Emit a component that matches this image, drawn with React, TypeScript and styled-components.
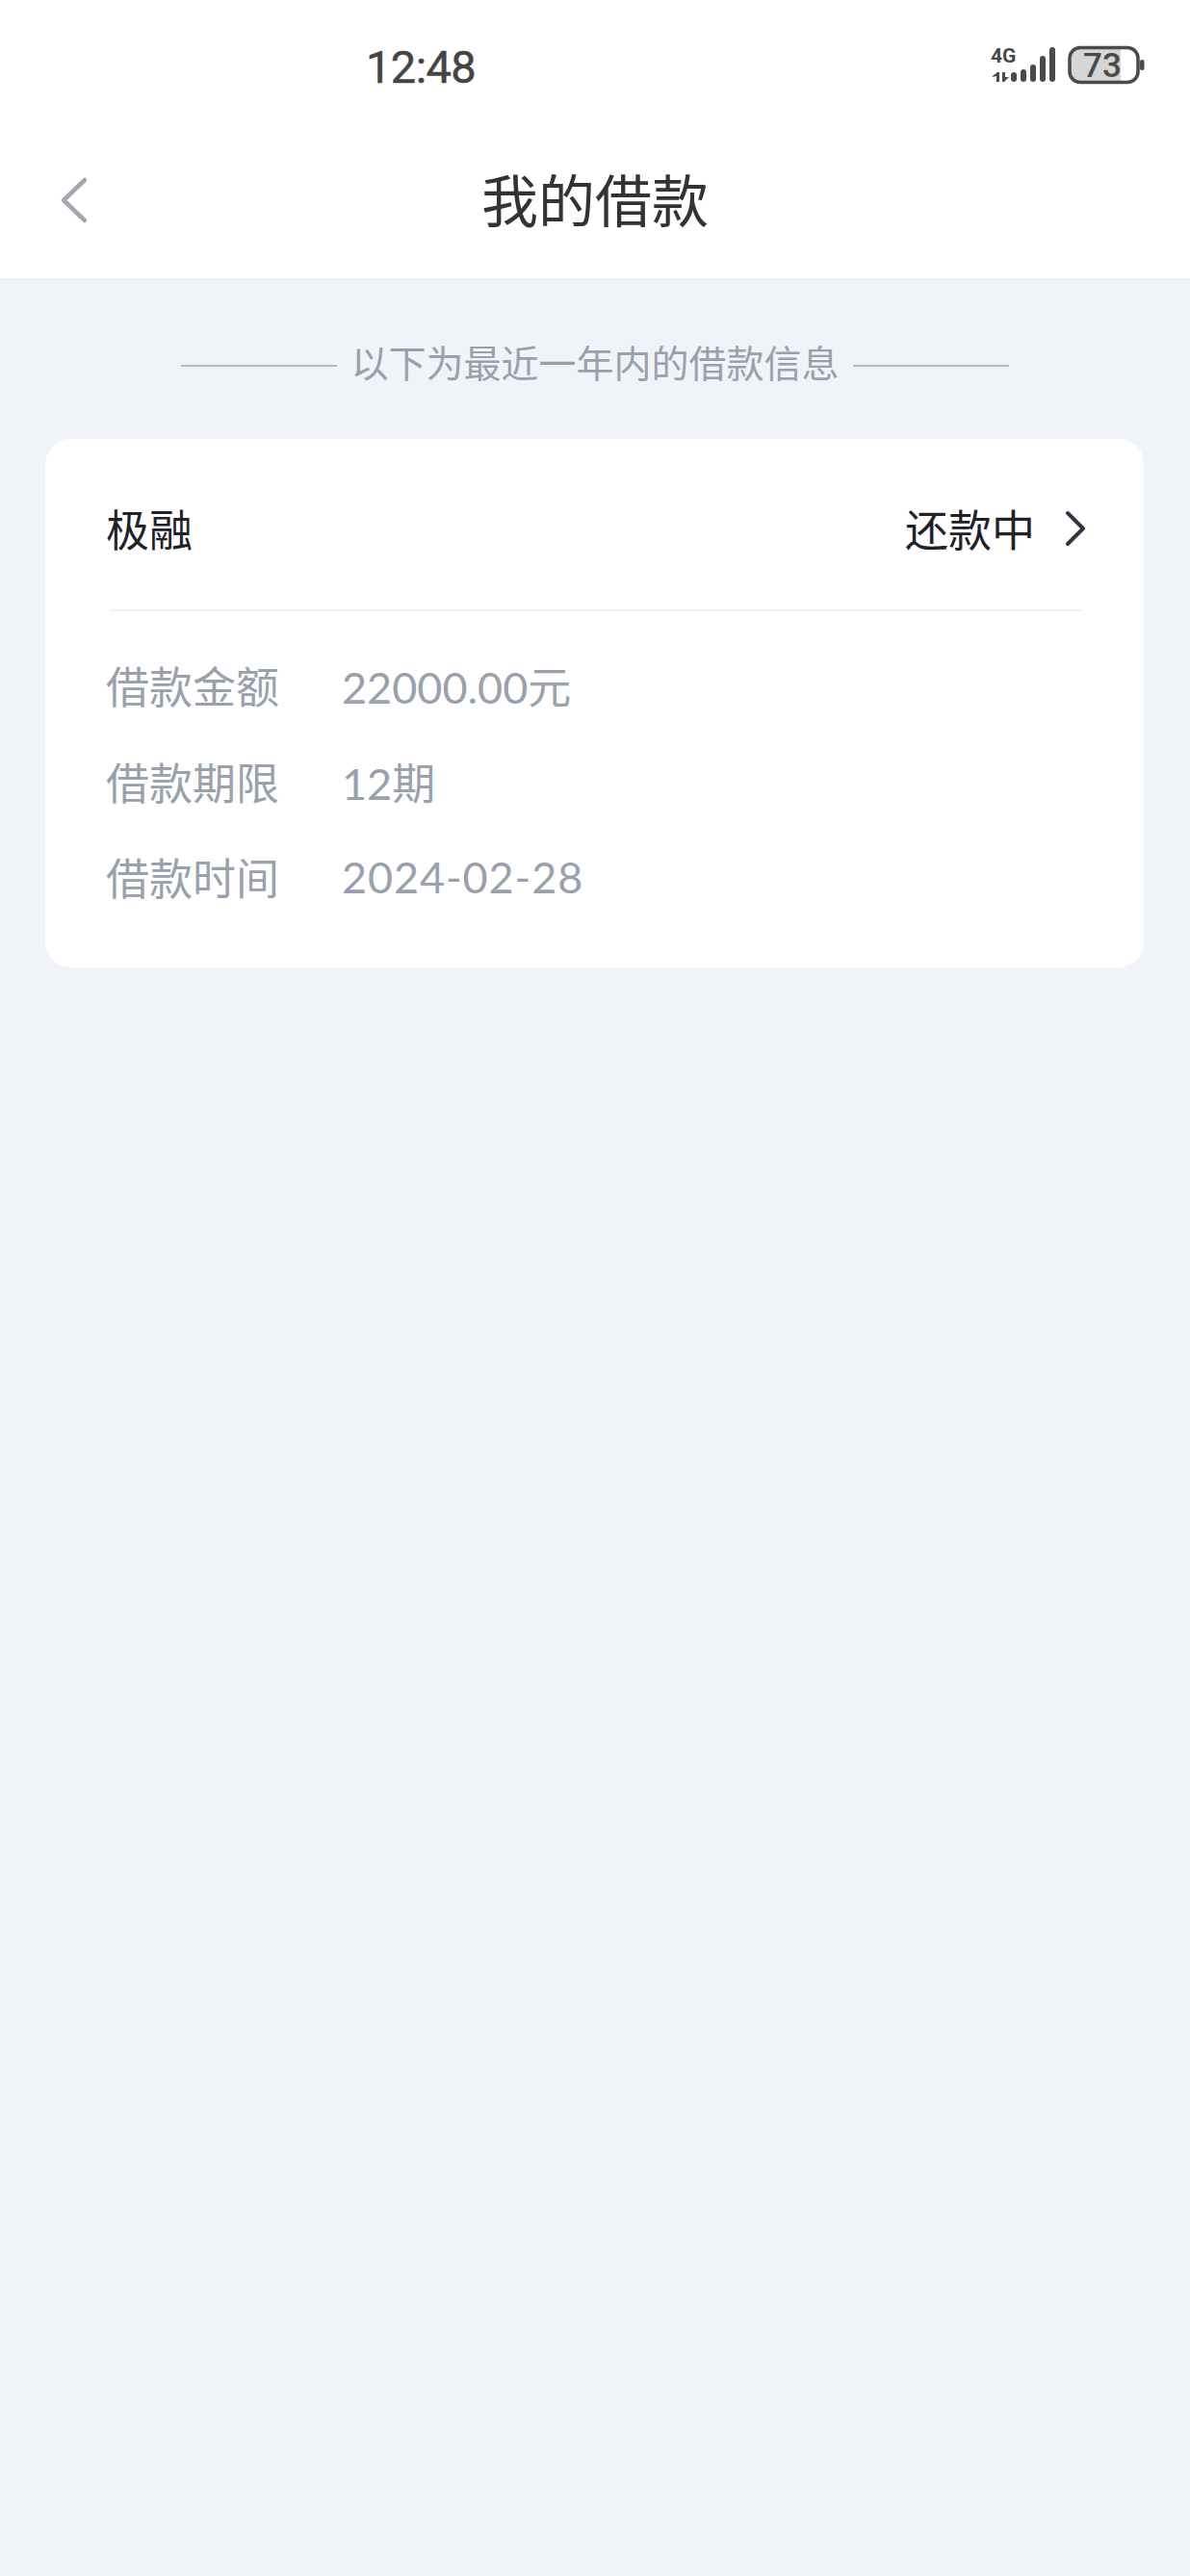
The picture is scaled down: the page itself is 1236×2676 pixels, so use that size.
import React from "react";
import styled, { createGlobalStyle } from "styled-components";

const GlobalStyle = createGlobalStyle`
	html,
	body {
		margin: 0;
		padding: 0;
		background: #f0f3f8;
		font-family: "Lato", "Noto Sans CJK SC", sans-serif;
	}
`;

const Page = styled.div`
	width: 1236px;
	min-height: 2676px;
	background: #f0f3f8;
`;

const StatusBar = styled.div`
	height: 137px;
	background: #fff;
	display: flex;
	align-items: flex-start;
	justify-content: space-between;
	box-sizing: border-box;
	padding: 46px 46px 0 380px;
`;

const Time = styled.span`
	font-family: "Roboto", sans-serif;
	font-size: 47px;
	line-height: 47px;
	letter-spacing: -0.6px;
	color: #444;
	-webkit-text-stroke: 0.5px #444;
`;

const NavBar = styled.header`
	height: 152px;
	background: #fff;
	display: grid;
	grid-template-columns: 1fr auto 1fr;
	align-items: center;
	box-sizing: border-box;
	padding: 0 60px 14px;
`;

const BackIcon = styled.svg`
	display: block;
	width: 34px;
	height: 52px;
	margin-top: 4px;
`;

const Title = styled.h1`
	margin: 0;
	font-size: 59px;
	font-weight: 400;
	line-height: 70px;
	color: #333;
	font-family: "Noto Sans CJK SC", sans-serif;
`;

const Notice = styled.div`
	display: flex;
	align-items: center;
	justify-content: center;
	gap: 14px;
	height: 178px;
	box-sizing: border-box;
	padding-bottom: 6px;
	font-size: 39px;
	color: #9aa1ac;
	font-family: "Noto Sans CJK SC", sans-serif;
`;

const NoticeLine = styled.span`
	width: 162px;
	height: 2px;
	margin-top: 10px;
	background: #b3b9c6;
`;

const Card = styled.section`
	margin: -11px 48px 0 47px;
	height: 549px;
	box-sizing: border-box;
	background: #fff;
	border-radius: 26px;
	padding: 0 64px 0 63px;
`;

const CardHead = styled.div`
	height: 177px;
	box-sizing: border-box;
	padding-top: 8px;
	display: flex;
	align-items: center;
	justify-content: space-between;
	font-size: 45px;
	color: #1f2329;
	font-family: "Noto Sans CJK SC", sans-serif;
`;

const Status = styled.div`
	display: flex;
	align-items: center;
	gap: 30px;
	margin-right: -5px;
`;

const ChevronIcon = styled.svg`
	display: block;
	width: 24px;
	height: 40px;
`;

const Divider = styled.div`
	height: 2px;
	margin: 0 1px 0 4px;
	background: #eff0f3;
`;

const Rows = styled.dl`
	margin: 0;
	padding-top: 27px;
	display: grid;
	grid-template-columns: 245px 1fr;
	grid-auto-rows: 99.5px;
	align-items: center;
	color: #9aa1ac;
	font-size: 45px;
`;

const Label = styled.dt`
	font-family: "Noto Sans CJK SC", sans-serif;
`;

const Value = styled.dd<{ $spacing?: number }>`
	margin: 0;
	font-family: "Lato", "Noto Sans CJK SC", sans-serif;
	letter-spacing: ${(p) => p.$spacing || 0}px;
`;

const Signal = () => (
	<svg width="162" height="42" viewBox="0 0 162 42" fill="#4a4a4a">
		<text x="1" y="19" fontSize="21" fontWeight="700" fontFamily="Roboto, sans-serif">
			4G
		</text>
		<path d="M3 33l5-4h2v10H7v-6l-4 1zM13 29h3v5h4l-5 5h-2z" />
		<rect x="22" y="29" width="6" height="10" rx="3" />
		<rect x="32" y="26" width="6" height="13" rx="3" />
		<rect x="42" y="21" width="6" height="18" rx="3" />
		<rect x="52" y="12" width="6" height="27" rx="3" />
		<rect x="62" y="3" width="6" height="36" rx="3" />
		<path d="M92 3h44v37H92a10 10 0 0 1-9-10V13a10 10 0 0 1 9-10z" fill="#d6d6d6" />
		<rect x="83" y="3.5" width="71" height="36" rx="11" fill="none" stroke="#4a4a4a" strokeWidth="3.5" />
		<text x="117" y="34" fontSize="35" fontWeight="500" textAnchor="middle" fontFamily="Roboto, sans-serif">
			73
		</text>
		<rect x="156" y="16" width="4.5" height="11" rx="2" />
	</svg>
);

const rows = [
	{ label: "借款金额", value: "22000.00元" },
	{ label: "借款期限", value: "12期" },
	{ label: "借款时间", value: "2024-02-28", spacing: 0.9 },
];

const App = () => {
	return (
		<Page>
			<GlobalStyle />
			<StatusBar>
				<Time>12:48</Time>
				<Signal />
			</StatusBar>
			<NavBar>
				<BackIcon viewBox="0 0 34 52" fill="none" stroke="#a3a8b3" strokeWidth="4.5" strokeLinecap="round" strokeLinejoin="round">
					<path d="M28 5L6 26l22 21" />
				</BackIcon>
				<Title>我的借款</Title>
			</NavBar>
			<Notice>
				<NoticeLine />
				以下为最近一年内的借款信息
				<NoticeLine />
			</Notice>
			<Card>
				<CardHead>
					极融
					<Status>
						还款中
						<ChevronIcon viewBox="0 0 24 40" fill="none" stroke="#30363f" strokeWidth="4" strokeLinecap="round" strokeLinejoin="round">
							<path d="M4 4l16 16L4 36" />
						</ChevronIcon>
					</Status>
				</CardHead>
				<Divider />
				<Rows>
					{rows.map((row) => (
						<React.Fragment key={row.label}>
							<Label>{row.label}</Label>
							<Value $spacing={row.spacing}>{row.value}</Value>
						</React.Fragment>
					))}
				</Rows>
			</Card>
		</Page>
	);
};

export default App;
